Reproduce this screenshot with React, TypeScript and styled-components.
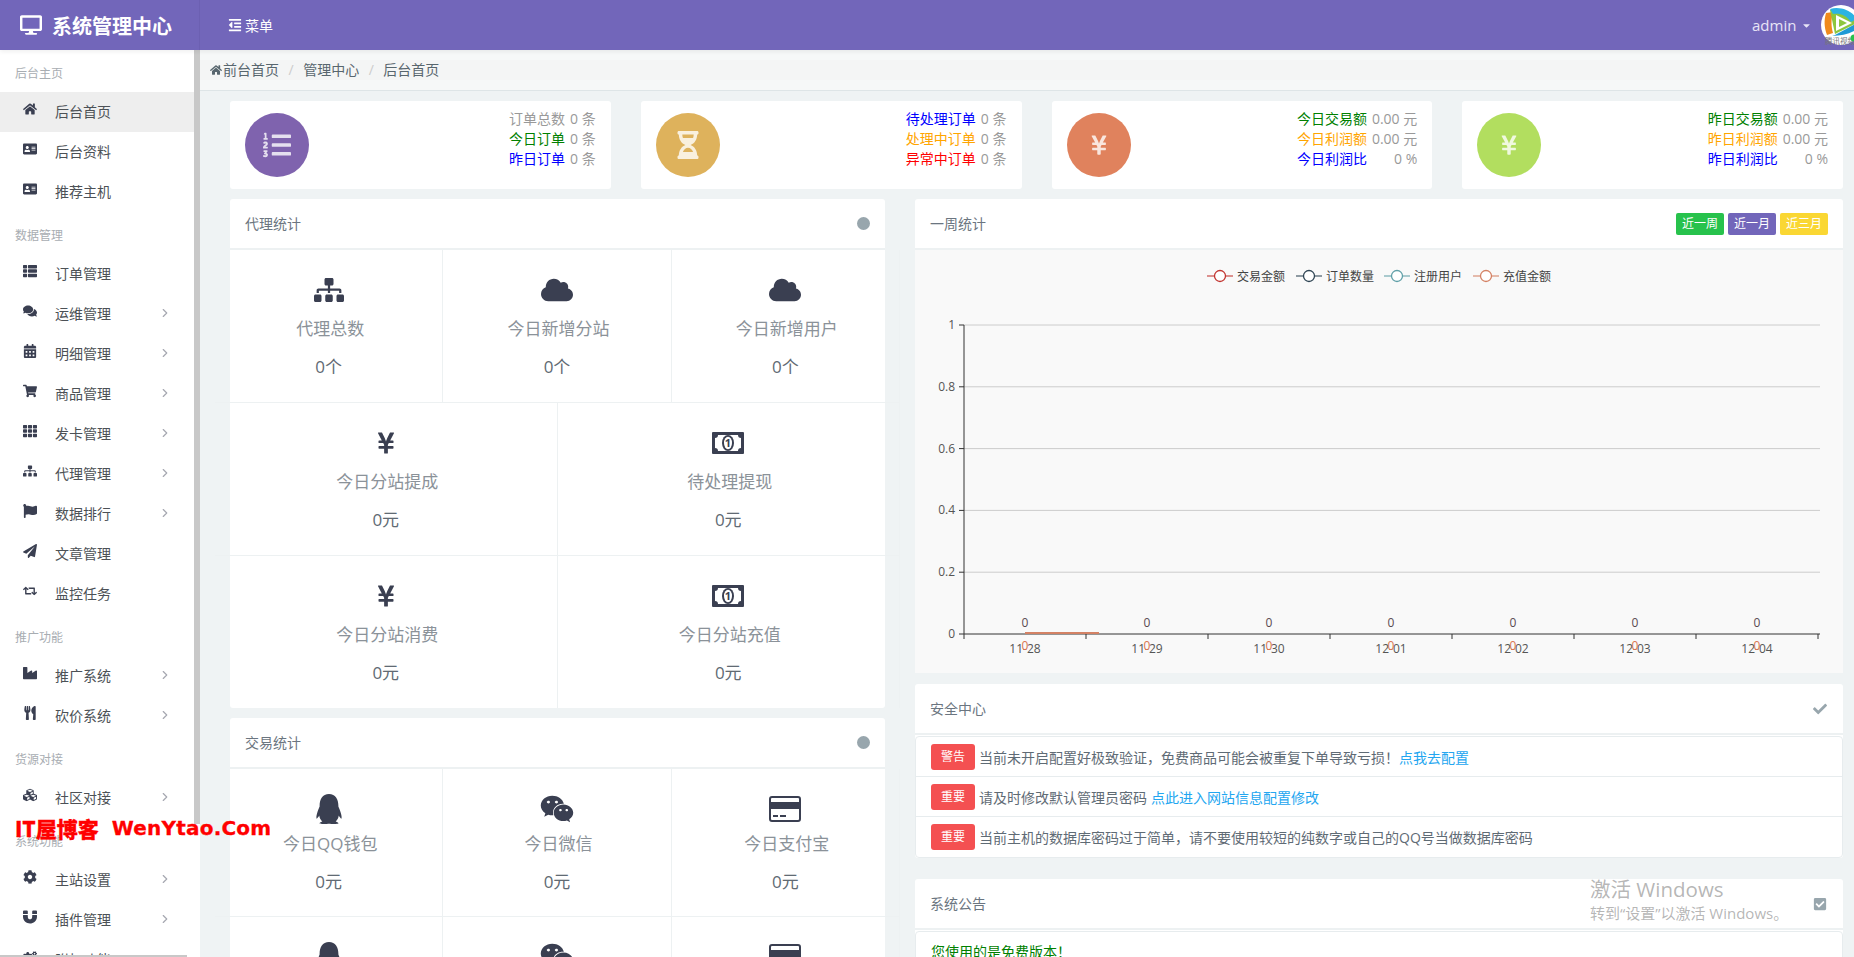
import React from "react";
import styled, { createGlobalStyle } from "styled-components";
import {
  FaAddressCard,
  FaCalendarAlt,
  FaCaretDown,
  FaCheck,
  FaCheckSquare,
  FaCloud,
  FaCog,
  FaCogs,
  FaComments,
  FaCubes,
  FaDesktop,
  FaFlag,
  FaHome,
  FaHourglassHalf,
  FaIndustry,
  FaListOl,
  FaMagnet,
  FaOutdent,
  FaPaperPlane,
  FaQq,
  FaRetweet,
  FaShoppingCart,
  FaSitemap,
  FaTh,
  FaThList,
  FaUtensils,
  FaWeixin,
  FaYenSign,
} from "react-icons/fa";
import { FiChevronRight } from "react-icons/fi";

const GlobalStyle = createGlobalStyle`
  html, body {
    margin: 0;
    height: 957px;
    overflow: hidden;
    background: #eff3f4;
    font-family: "Open Sans", "Noto Sans CJK SC", sans-serif;
    font-size: 14px;
    color: #58666e;
  }
  * { box-sizing: border-box; }
`;

const Page = styled.div`
  position: relative;
  height: 957px;
  overflow: hidden;
  display: flex;
  flex-direction: column;
`;

const TopBar = styled.header`
  height: 50px;
  flex: none;
  display: flex;
  align-items: center;
  background: #7266ba;
  color: #fff;
  box-shadow: 0 2px 4px rgba(0, 0, 0, 0.06);
  position: relative;
  z-index: 2;
`;

const Brand = styled.div`
  width: 200px;
  height: 50px;
  display: flex;
  align-items: center;
  padding-left: 20px;
  gap: 10px;
  font-size: 20px;
  font-weight: 700;
  border-right: 1px solid #6c60b2;
  white-space: nowrap;
`;

const MenuToggle = styled.div`
  margin-left: 28px;
  display: flex;
  align-items: center;
  gap: 3px;
  font-size: 14px;
`;

const UserArea = styled.div`
  margin-left: auto;
  display: flex;
  align-items: center;
  height: 50px;
  font-size: 15px;
  color: #e8e4f6;
  width: 102px;
  flex: none;
  white-space: nowrap;
`;

const Caret = styled(FaCaretDown)`
  flex: none;
  margin-left: 5px;
  margin-right: 9px;
`;

const Avatar = styled.svg`
  width: 40px;
  height: 40px;
  flex: none;
`;

const Body = styled.div`
  flex: 1;
  min-height: 0;
  display: flex;
`;

const Sidebar = styled.aside`
  width: 200px;
  flex: none;
  background: #fff;
  position: relative;
  overflow: hidden;
  color: #4c5156;

  &::after {
    content: "";
    position: absolute;
    top: 0;
    right: 0;
    width: 6px;
    height: 774px;
    background: #c8c8c8;
  }
  &::before {
    content: "";
    position: absolute;
    left: 0;
    bottom: 0;
    width: 187px;
    height: 2px;
    background: #c8c8c8;
  }
`;

const NavLabel = styled.div`
  height: 42px;
  padding: 15px 0 0 15px;
  font-size: 12px;
  line-height: 18px;
  color: #a8adb2;
`;

const NavItem = styled.div<{ $active?: boolean }>`
  height: 40px;
  width: 194px;
  display: flex;
  align-items: center;
  padding: 0 0 2px 22px;
  background: ${(p) => (p.$active ? "#eeeeee" : "transparent")};
`;

const NavIcon = styled.span`
  width: 16px;
  display: flex;
  justify-content: center;
  margin-right: 17px;
  margin-bottom: 5px;
  font-size: 14px;
  color: #3a3f51;
`;

const NavChevron = styled(FiChevronRight)`
  margin-left: auto;
  margin-right: 22px;
  color: #a6a8b1;
  font-size: 14px;
`;

const Main = styled.main`
  flex: 1;
  min-width: 0;
  display: flex;
  flex-direction: column;
`;

const BreadcrumbBar = styled.div`
  height: 41px;
  flex: none;
  padding: 10px 0;
  background: #f6f8f8;
  border-bottom: 1px solid #dee5e7;
`;

const BreadcrumbBand = styled.div`
  height: 20px;
  padding-left: 10px;
  background: #f4f5f5;
  display: flex;
  align-items: center;
  line-height: 20px;
  color: #58666e;
`;

const Crumb = styled.span`
  display: flex;
  align-items: center;
  gap: 1px;
`;

const CrumbSep = styled.span`
  color: #cccccc;
  padding: 0 9.5px;
`;

const Content = styled.div`
  padding: 10px 11px 0 30px;
`;

const StatRow = styled.div`
  display: grid;
  grid-template-columns: repeat(4, 1fr);
  gap: 30px;
  margin-bottom: 10px;
`;

const StatCard = styled.div`
  height: 88px;
  background: #fff;
  border-radius: 3px;
  display: flex;
  justify-content: space-between;
  padding: 7px 15px 0 15px;
`;

const StatCircle = styled.div<{ $color: string }>`
  width: 64px;
  height: 64px;
  margin-top: 5px;
  border-radius: 50%;
  background: ${(p) => p.$color};
  color: rgba(255, 255, 255, 0.8);
  display: flex;
  align-items: center;
  justify-content: center;
`;

const StatLines = styled.div`
  display: grid;
  grid-template-columns: auto auto;
  align-content: start;
  line-height: 20px;
  padding-top: 1px;
`;

const StatName = styled.span<{ $color: string }>`
  color: ${(p) => p.$color};
`;

const StatValue = styled.span`
  padding-left: 5px;
  text-align: right;
  color: #999999;
`;

const Columns = styled.div`
  display: grid;
  grid-template-columns: 655px 928px;
  gap: 30px;
`;

const Column = styled.div`
  display: flex;
  flex-direction: column;
`;

const Panel = styled.section<{ $gap?: number }>`
  background: #fff;
  border-radius: 3px;
  margin-bottom: ${(p) => p.$gap ?? 10}px;
`;

const PanelHead = styled.div`
  height: 51px;
  padding: 0 15px;
  display: flex;
  align-items: center;
  justify-content: space-between;
  border-bottom: 2px solid #edf1f2;
  color: #6b7580;
`;

const PanelTitle = styled.span`
  margin-top: -2px;
`;

const StatusDot = styled.span`
  width: 13px;
  height: 13px;
  border-radius: 50%;
  background: #98a6ad;
`;

const StatusIcon = styled.span`
  display: flex;
  font-size: 14px;
  color: #98a6ad;
  margin-right: 1px;
`;

const TileRow = styled.div<{ $cols: number; $compact?: boolean }>`
  display: grid;
  grid-template-columns: repeat(${(p) => p.$cols}, 1fr);
  margin: 0 -15px;
  height: ${(p) => (p.$compact ? 148 : 153)}px;
  border-bottom: 1px solid #edf1f2;

  &:last-child {
    height: ${(p) => (p.$compact ? 148 : 152)}px;
    border-bottom: none;
  }
`;

const Tile = styled.div`
  display: flex;
  flex-direction: column;
  align-items: center;
  border-right: 1px solid #edf1f2;
  padding-top: 22px;
`;

const TileIcon = styled.div`
  height: 36px;
  display: flex;
  align-items: center;
  justify-content: center;
  color: #3a3f51;
`;

const TileLabel = styled.div<{ $compact?: boolean }>`
  margin-top: ${(p) => (p.$compact ? 4 : 8)}px;
  padding-left: 3px;
  font-size: 17px;
  line-height: 26px;
  color: #8b9299;
`;

const TileValue = styled.div`
  margin-top: 12px;
  font-size: 17px;
  line-height: 26px;
  color: #616a73;
`;

const RangeButtons = styled.div`
  display: flex;
  gap: 4px;
`;

const RangeButton = styled.span<{ $color: string }>`
  width: 48px;
  height: 22px;
  border-radius: 2px;
  background: ${(p) => p.$color};
  color: #fff;
  font-size: 12px;
  line-height: 22px;
  text-align: center;
`;

const ChartBox = styled.div`
  height: 423px;
  background: #f9f9f9;
`;

const ChartSvg = styled.svg`
  display: block;
  width: 928px;
  height: 423px;
  font-family: "Open Sans", "Noto Sans CJK SC", sans-serif;
  font-size: 12px;
`;

const NoticeList = styled.div`
  margin-top: 1px;
  border: 1px solid #e7ecee;
  border-radius: 4px;
  background: #fff;
`;

const NoticeItem = styled.div`
  height: 40px;
  display: flex;
  align-items: center;
  padding-left: 15px;
  color: #5f6b75;
  border-bottom: 1px solid #e7ecee;
  white-space: nowrap;
  &:last-child {
    border-bottom: none;
  }
`;

const NoticeTag = styled.span`
  width: 44px;
  height: 26px;
  flex: none;
  margin-right: 4px;
  border-radius: 3px;
  background: #f45051;
  color: #fff;
  font-size: 12px;
  line-height: 26px;
  text-align: center;
`;

const NoticeLink = styled.span<{ $tight?: boolean }>`
  margin-left: ${(p) => (p.$tight ? 0 : 4)}px;
  color: #23a6f0;
`;

const FreeNote = styled.div`
  padding: 10px 15px;
  color: #008000;
  line-height: 20px;
`;

const BlogMark = styled.div`
  position: absolute;
  left: 15px;
  top: 814px;
  z-index: 5;
  display: flex;
  gap: 13px;
  color: #ff0000;
  font-family: "Noto Sans CJK SC", sans-serif;
  font-weight: 900;
  font-size: 21px;
  line-height: 28px;
  white-space: nowrap;
  -webkit-text-stroke: 0.3px #ff0000;
`;

const BlogDomain = styled.span`
  font-family: "DejaVu Sans", sans-serif;
  font-weight: 700;
  font-size: 20px;
  letter-spacing: 0.2px;
`;

const ActivationMark = styled.div`
  position: absolute;
  left: 1590px;
  top: 875px;
  z-index: 5;
  color: rgba(120, 120, 120, 0.55);
  font-size: 15px;
  line-height: 20px;
  white-space: nowrap;
`;

const ActivationTitle = styled.div`
  font-size: 20.5px;
  line-height: 28px;
`;

type NavEntry =
  | { section: string }
  | { icon: React.ReactNode; text: string; more?: boolean; active?: boolean };

const navEntries: NavEntry[] = [
  { section: "后台主页" },
  { icon: <FaHome />, text: "后台首页", active: true },
  { icon: <FaAddressCard />, text: "后台资料" },
  { icon: <FaAddressCard />, text: "推荐主机" },
  { section: "数据管理" },
  { icon: <FaThList />, text: "订单管理" },
  { icon: <FaComments />, text: "运维管理", more: true },
  { icon: <FaCalendarAlt />, text: "明细管理", more: true },
  { icon: <FaShoppingCart />, text: "商品管理", more: true },
  { icon: <FaTh />, text: "发卡管理", more: true },
  { icon: <FaSitemap />, text: "代理管理", more: true },
  { icon: <FaFlag />, text: "数据排行", more: true },
  { icon: <FaPaperPlane />, text: "文章管理" },
  { icon: <FaRetweet />, text: "监控任务" },
  { section: "推广功能" },
  { icon: <FaIndustry />, text: "推广系统", more: true },
  { icon: <FaUtensils />, text: "砍价系统", more: true },
  { section: "货源对接" },
  { icon: <FaCubes />, text: "社区对接", more: true },
  { section: "系统功能" },
  { icon: <FaCog />, text: "主站设置", more: true },
  { icon: <FaMagnet />, text: "插件管理", more: true },
  { icon: <FaCogs />, text: "附加功能", more: true },
];

const statCards = [
  {
    color: "#7f63ae",
    icon: <FaListOl size={28} />,
    lines: [
      ["订单总数", "#999999", "0 条"],
      ["今日订单", "#008000", "0 条"],
      ["昨日订单", "#0000ff", "0 条"],
    ],
  },
  {
    color: "#deb25c",
    icon: <FaHourglassHalf size={28} />,
    lines: [
      ["待处理订单", "#0000ff", "0 条"],
      ["处理中订单", "#ffa500", "0 条"],
      ["异常中订单", "#ff0000", "0 条"],
    ],
  },
  {
    color: "#e0825d",
    icon: <FaYenSign size={22} />,
    lines: [
      ["今日交易额", "#008000", "0.00 元"],
      ["今日利润额", "#ffa500", "0.00 元"],
      ["今日利润比", "#0000ff", "0 %"],
    ],
  },
  {
    color: "#b2de5f",
    icon: <FaYenSign size={22} />,
    lines: [
      ["昨日交易额", "#008000", "0.00 元"],
      ["昨日利润额", "#ffa500", "0.00 元"],
      ["昨日利润比", "#0000ff", "0 %"],
    ],
  },
];

type TileData = { icon: React.ReactNode; label: string; value: string };

const MoneyIcon = () => (
  <svg width="32" height="22" viewBox="0 0 32 22">
    <rect width="32" height="22" rx="1" fill="currentColor" />
    <path d="M6 3 H26 A3 3 0 0 0 29 6 V16 A3 3 0 0 0 26 19 H6 A3 3 0 0 0 3 16 V6 A3 3 0 0 0 6 3 Z" fill="#fff" />
    <ellipse cx="16" cy="11" rx="6" ry="8" fill="currentColor" />
    <ellipse cx="16" cy="11" rx="4" ry="6.2" fill="#fff" />
    <text x="16" y="15" textAnchor="middle" fontSize="11" fontWeight="700" fill="currentColor">1</text>
  </svg>
);

const CardIcon = () => (
  <svg width="32" height="26" viewBox="0 0 32 26">
    <rect x="1" y="1" width="30" height="24" rx="2" fill="none" stroke="currentColor" strokeWidth="2" />
    <rect x="1" y="6" width="30" height="7" fill="currentColor" />
    <rect x="4" y="19" width="5" height="2" fill="currentColor" />
    <rect x="11" y="19" width="6" height="2" fill="currentColor" />
  </svg>
);

const agentRows: TileData[][] = [
  [
    { icon: <FaSitemap size={30} />, label: "代理总数", value: "0个" },
    { icon: <FaCloud size={32} />, label: "今日新增分站", value: "0个" },
    { icon: <FaCloud size={32} />, label: "今日新增用户", value: "0个" },
  ],
  [
    { icon: <FaYenSign size={24} />, label: "今日分站提成", value: "0元" },
    { icon: <MoneyIcon />, label: "待处理提现", value: "0元" },
  ],
  [
    { icon: <FaYenSign size={24} />, label: "今日分站消费", value: "0元" },
    { icon: <MoneyIcon />, label: "今日分站充值", value: "0元" },
  ],
];

const tradeRows: TileData[][] = [
  [
    { icon: <FaQq size={30} />, label: "今日QQ钱包", value: "0元" },
    { icon: <FaWeixin size={34} />, label: "今日微信", value: "0元" },
    { icon: <CardIcon />, label: "今日支付宝", value: "0元" },
  ],
  [
    { icon: <FaQq size={30} />, label: "昨日QQ钱包", value: "0元" },
    { icon: <FaWeixin size={34} />, label: "昨日微信", value: "0元" },
    { icon: <CardIcon />, label: "昨日支付宝", value: "0元" },
  ],
];

const legend = [
  { line: 1207, text: "交易金额", color: "#c23531" },
  { line: 1296, text: "订单数量", color: "#2f4554" },
  { line: 1384, text: "注册用户", color: "#61a0a8" },
  { line: 1473, text: "充值金额", color: "#d48265" },
];

const days = ["11-28", "11-29", "11-30", "12-01", "12-02", "12-03", "12-04"];
const yTicks = ["1", "0.8", "0.6", "0.4", "0.2", "0"];

// chart box starts at x=915, y=250 on the page
const WeekChart = () => {
  const left = 49;
  const right = 905;
  const top = 75;
  const step = 61.8;
  const base = top + step * 5;
  const band = 122;
  return (
    <ChartSvg viewBox="0 0 928 423">
      {legend.map((l) => (
        <g key={l.text}>
          <line x1={l.line - 915} x2={l.line - 915 + 26} y1={26} y2={26} stroke={l.color} strokeOpacity="0.7" strokeWidth="1.5" />
          <circle cx={l.line - 915 + 13} cy={26} r={5.5} fill="#fff" stroke={l.color} strokeWidth="1.3" />
          <text x={l.line - 915 + 30} y={31} fill="#444">{l.text}</text>
        </g>
      ))}
      {yTicks.map((t, i) => {
        const y = top + step * i;
        return (
          <g key={t}>
            {i < 5 && <line x1={left} x2={right} y1={y} y2={y} stroke="#cccccc" />}
            <line x1={left - 5} x2={left} y1={y} y2={y} stroke="#333" />
            <text x={left - 9} y={y + 4} textAnchor="end" fill="#555">{t}</text>
          </g>
        );
      })}
      <line x1={left} x2={left} y1={top} y2={base + 5} stroke="#333" />
      <line x1={left} x2={right} y1={base} y2={base} stroke="#333" />
      <line x1={left + band / 2} x2={184} y1={base - 1} y2={base - 1} stroke="#d48265" strokeWidth="2" />
      {days.map((d, i) => {
        const x = left + band * i + band / 2;
        return (
          <g key={d}>
            <line x1={left + band * (i + 1)} x2={left + band * (i + 1)} y1={base} y2={base + 5} stroke="#333" />
            <text x={x} y={base + 19} textAnchor="middle" fill="#555">{d}</text>
            <text x={x} y={base - 7} textAnchor="middle" fill="#5a4a50">0</text>
            <text x={x} y={base + 16} textAnchor="middle" fill="#d9734e">0</text>
          </g>
        );
      })}
    </ChartSvg>
  );
};

const Tiles = ({ rows, compact }: { rows: TileData[][]; compact?: boolean }) => (
  <>
    {rows.map((row, i) => (
      <TileRow key={i} $cols={row.length} $compact={compact}>
        {row.map((t) => (
          <Tile key={t.label}>
            <TileIcon>{t.icon}</TileIcon>
            <TileLabel $compact={compact}>{t.label}</TileLabel>
            <TileValue>{t.value}</TileValue>
          </Tile>
        ))}
      </TileRow>
    ))}
  </>
);

export default function App() {
  return (
    <Page>
      <GlobalStyle />
      <TopBar>
        <Brand>
          <FaDesktop size={22} />
          系统管理中心
        </Brand>
        <MenuToggle>
          <FaOutdent size={14} />
          菜单
        </MenuToggle>
        <UserArea>
          admin
          <Caret size={11} />
          <Avatar viewBox="0 0 40 40">
            <circle cx="20" cy="20" r="20" fill="#fff" />
            <path d="M5 8 C 3 15 3 22 6 30 L 12 28 C 10 21 10 15 12 7 Z" fill="#f08a1c" />
            <path d="M9 5 C 18 3 30 9 36 18 L 14 29 Z" fill="#8cc63f" />
            <path d="M14 30 L 36 18 C 38 22 37 24 35 25 C 28 29 20 31 11 31 Z" fill="#1f9ad6" />
            <path d="M9 4 C 20 1 31 6 36 14 L 30 17 C 25 10 19 8 12 9 Z" fill="#2bb3e3" />
            <path d="M15 10 L 31 18 L 15 26 Z" fill="#fff" />
            <path d="M18 14 L 26 18 L 18 22 Z" fill="#8cc63f" />
            <text x="4" y="38.5" fontSize="7.5" fill="#777">腾讯视频</text>
            <circle cx="33" cy="33" r="3.5" fill="#27c24c" />
          </Avatar>
        </UserArea>
      </TopBar>
      <Body>
        <Sidebar>
          {navEntries.map((e) =>
            "section" in e ? (
              <NavLabel key={e.section}>{e.section}</NavLabel>
            ) : (
              <NavItem key={e.text} $active={e.active}>
                <NavIcon>{e.icon}</NavIcon>
                {e.text}
                {e.more && <NavChevron />}
              </NavItem>
            )
          )}
        </Sidebar>
        <Main>
          <BreadcrumbBar>
            <BreadcrumbBand>
              <Crumb>
                <FaHome size={12} />
                前台首页
              </Crumb>
              <CrumbSep>/</CrumbSep>
              <Crumb>管理中心</Crumb>
              <CrumbSep>/</CrumbSep>
              <Crumb>后台首页</Crumb>
            </BreadcrumbBand>
          </BreadcrumbBar>
          <Content>
            <StatRow>
              {statCards.map((c) => (
                <StatCard key={c.lines[0][0]}>
                  <StatCircle $color={c.color}>{c.icon}</StatCircle>
                  <StatLines>
                    {c.lines.map(([name, color, value]) => (
                      <React.Fragment key={name}>
                        <StatName $color={color}>{name}</StatName>
                        <StatValue>{value}</StatValue>
                      </React.Fragment>
                    ))}
                  </StatLines>
                </StatCard>
              ))}
            </StatRow>
            <Columns>
              <Column>
                <Panel>
                  <PanelHead>
                    <PanelTitle>代理统计</PanelTitle>
                    <StatusDot />
                  </PanelHead>
                  <Tiles rows={agentRows} />
                </Panel>
                <Panel>
                  <PanelHead>
                    <PanelTitle>交易统计</PanelTitle>
                    <StatusDot />
                  </PanelHead>
                  <Tiles rows={tradeRows} compact />
                </Panel>
              </Column>
              <Column>
                <Panel $gap={11}>
                  <PanelHead>
                    <PanelTitle>一周统计</PanelTitle>
                    <RangeButtons>
                      <RangeButton $color="#27c24c">近一周</RangeButton>
                      <RangeButton $color="#7266ba">近一月</RangeButton>
                      <RangeButton $color="#fad733">近三月</RangeButton>
                    </RangeButtons>
                  </PanelHead>
                  <ChartBox>
                    <WeekChart />
                  </ChartBox>
                </Panel>
                <Panel $gap={21}>
                  <PanelHead>
                    <PanelTitle>安全中心</PanelTitle>
                    <StatusIcon>
                      <FaCheck />
                    </StatusIcon>
                  </PanelHead>
                  <NoticeList>
                    <NoticeItem>
                      <NoticeTag>警告</NoticeTag>
                      当前未开启配置好极致验证，免费商品可能会被重复下单导致亏损！
                      <NoticeLink $tight>点我去配置</NoticeLink>
                    </NoticeItem>
                    <NoticeItem>
                      <NoticeTag>重要</NoticeTag>
                      请及时修改默认管理员密码
                      <NoticeLink>点此进入网站信息配置修改</NoticeLink>
                    </NoticeItem>
                    <NoticeItem>
                      <NoticeTag>重要</NoticeTag>
                      当前主机的数据库密码过于简单，请不要使用较短的纯数字或自己的QQ号当做数据库密码
                    </NoticeItem>
                  </NoticeList>
                </Panel>
                <Panel>
                  <PanelHead>
                    <PanelTitle>系统公告</PanelTitle>
                    <StatusIcon>
                      <FaCheckSquare />
                    </StatusIcon>
                  </PanelHead>
                  <NoticeList>
                    <FreeNote>您使用的是免费版本！</FreeNote>
                  </NoticeList>
                </Panel>
              </Column>
            </Columns>
          </Content>
        </Main>
      </Body>
      <BlogMark>
        IT屋博客
        <BlogDomain>WenYtao.Com</BlogDomain>
      </BlogMark>
      <ActivationMark>
        <ActivationTitle>激活 Windows</ActivationTitle>
        转到“设置”以激活 Windows。
      </ActivationMark>
    </Page>
  );
}
